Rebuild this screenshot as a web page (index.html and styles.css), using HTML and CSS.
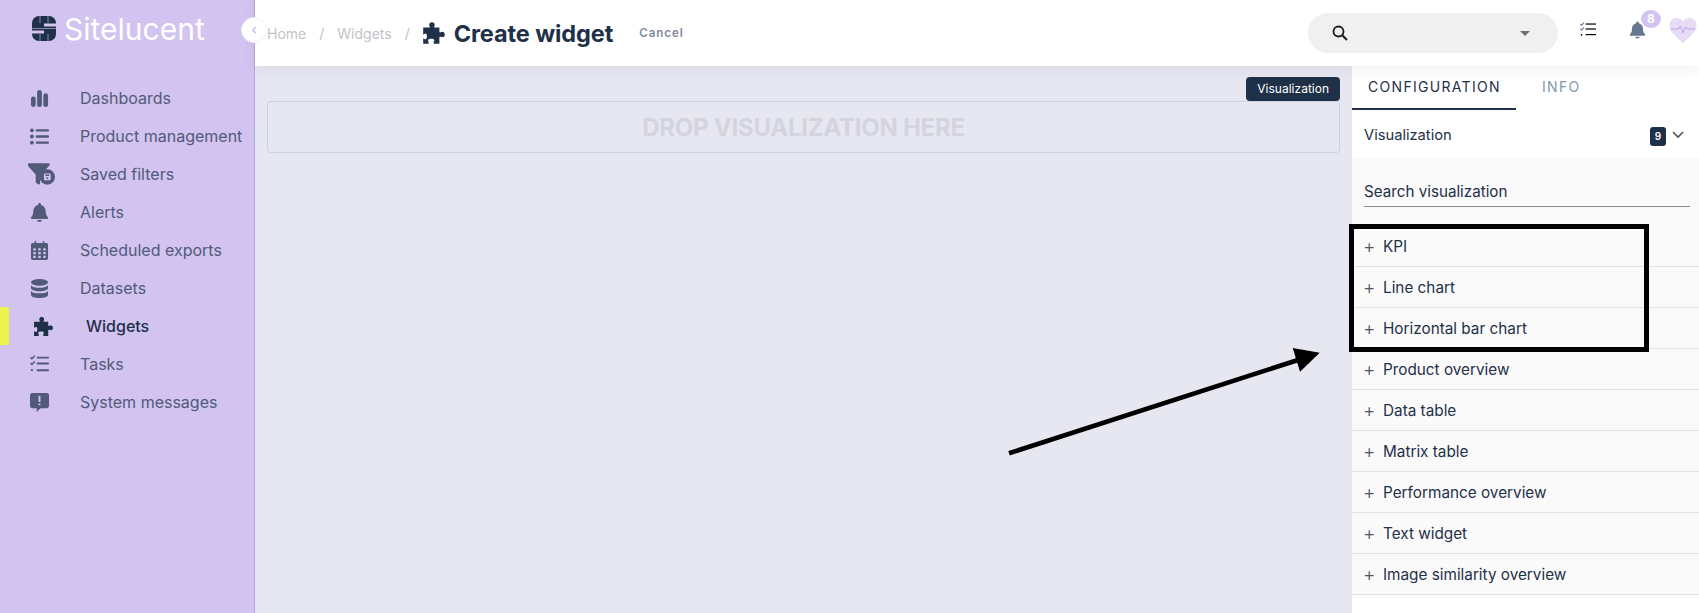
FILE: index.html
```html
<!DOCTYPE html>
<html lang="en">
<head>
    <meta charset="UTF-8">
    <meta name="viewport" content="width=device-width, initial-scale=1.0">
    <title>Create widget</title>
    <link rel="stylesheet" href="styles.css">
</head>
<body>
    <div class="sidebar">
        <div class="logo">
            <svg class="logo-mark" viewBox="0 0 24 25" width="24" height="25">
                <rect width="24" height="25" rx="7" fill="#1f3049"/>
                <rect x="12" y="7.500" width="12" height="3" fill="#d2c3f0"/>
                <rect x="0" y="14.500" width="12" height="3" fill="#d2c3f0"/>
                <path d="M8 0V7M16 0V7M8 18V25M16 18V25M0 12.500H24" stroke="#d2c3f0" stroke-width="0.6"/>
            </svg>
            <span class="logo-text">Sitelucent</span>
        </div>
        <button class="collapse">
            <svg viewBox="0 0 10 12" width="7" height="10"><path d="M7 1.500 2.500 6 7 10.500" fill="none" stroke="#c4aef0" stroke-width="1.600"/></svg>
        </button>
        <div class="menu">
            <a class="menu-item" href="#">
                <svg class="menu-icon" viewBox="0 0 20 20"><rect x="1" y="8" width="5" height="11" rx="2.500"/><rect x="7.500" y="1" width="5" height="18" rx="2.500"/><rect x="14" y="4.500" width="5" height="14.500" rx="2.500"/></svg>
                Dashboards
            </a>
            <a class="menu-item" href="#">
                <svg class="menu-icon" viewBox="0 0 20 20"><circle cx="2" cy="3.500" r="2"/><circle cx="2" cy="10" r="2"/><circle cx="2" cy="16.500" r="2"/><rect x="6" y="2.300" width="14" height="2.400" rx="1"/><rect x="6" y="8.800" width="14" height="2.400" rx="1"/><rect x="6" y="15.300" width="14" height="2.400" rx="1"/></svg>
                Product management
            </a>
            <a class="menu-item" href="#">
                <svg class="menu-icon menu-icon-wide" viewBox="0 0 30 22"><path d="M1 1.500C1 .5 1.500 0 2.500 0H22C23.500 0 24 1.500 23 2.500L19 6.500C15 8 12.500 12 13.500 17V21C13.500 22 12 22 11 21.300L9 19.500V11.500L1.300 3C1 2.500 1 2 1 1.500Z"/><circle cx="21" cy="14" r="8"/><rect x="17.500" y="10.500" width="7" height="7" rx="1" fill="#d2c3f0"/><rect x="19" y="11.500" width="4" height="1.500"/><circle cx="21" cy="15.300" r="1"/></svg>
                Saved filters
            </a>
            <a class="menu-item" href="#">
                <svg class="menu-icon" viewBox="0 0 20 20"><path d="M10 0C9 0 8.500 .7 8.500 1.500V2.200C5.500 3 3.500 5.500 3.500 8.500C3.500 12 2.500 13.500 1.300 14.800C.6 15.600 1 16.800 2 16.800H18C19 16.800 19.400 15.600 18.700 14.800C17.500 13.500 16.500 12 16.500 8.500C16.500 5.500 14.500 3 11.500 2.200V1.500C11.500 .7 11 0 10 0ZM7.500 18C7.500 19.300 8.600 20 10 20S12.500 19.300 12.500 18Z"/></svg>
                Alerts
            </a>
            <a class="menu-item" href="#">
                <svg class="menu-icon" viewBox="0 0 20 20"><path fill-rule="evenodd" d="M5 0H6.500V2H13.500V0H15V2H17C18.500 2 19 3 19 4V18C19 19.300 18.300 20 17 20H3C1.700 20 1 19.300 1 18V4C1 3 1.500 2 3 2H5ZM3.500 7.500V10H6V7.500ZM8.700 7.500V10H11.300V7.500ZM14 7.500V10H16.500V7.500ZM3.500 11.500V14H6V11.500ZM8.700 11.500V14H11.300V11.500ZM14 11.500V14H16.500V11.500ZM3.500 15.500V18H6V15.500ZM8.700 15.500V18H11.300V15.500ZM14 15.500V18H16.500V15.500Z"/></svg>
                Scheduled exports
            </a>
            <a class="menu-item" href="#">
                <svg class="menu-icon" viewBox="0 0 20 20"><ellipse cx="10" cy="3.500" rx="9" ry="3.500"/><path d="M1 6.500C2.500 8.500 6 9.200 10 9.200S17.500 8.500 19 6.500V9.500C19 11.500 15 13 10 13S1 11.500 1 9.500ZM1 12.500C2.500 14.500 6 15 10 15S17.500 14.500 19 12.500V16.500C19 18.500 15 20 10 20S1 18.500 1 16.500Z"/></svg>
                Datasets
            </a>
            <a class="menu-item menu-item-active" href="#">
                <svg class="menu-icon" viewBox="0 0 20 20"><path d="M1 5.500H6C6.500 5.500 6.700 5 6.400 4.500C5.700 3.700 5.700 1 8.300 1S10.900 3.700 10.200 4.500C9.900 5 10.100 5.500 10.600 5.500H14.500V9C14.500 9.500 15 9.700 15.500 9.400C16.300 8.700 19 8.700 19 11.300S16.300 13.900 15.500 13.200C15 12.900 14.500 13.100 14.500 13.600V19H9.800V17.500C9.800 17 10.300 16.700 10.300 16C10.300 14.300 5 14.300 5 16C5 16.700 5.500 17 5.500 17.500V19H1V14.500C2 14.500 2.200 15.200 3 15.200C4.500 15.200 4.500 10.500 3 10.500C2.200 10.500 2 11.200 1 11.200Z"/></svg>
                Widgets
            </a>
            <a class="menu-item" href="#">
                <svg class="menu-icon" viewBox="0 0 20 20"><path d="M.5 2.500 2 4 5 .8M.5 8.500 2 10 5 6.800" fill="none" stroke="#515a78" stroke-width="1.500"/><circle cx="2" cy="16" r="1.200"/><rect x="7" y="1.800" width="13" height="2" rx=".8"/><rect x="7" y="8" width="13" height="2" rx=".8"/><rect x="7" y="15" width="13" height="2" rx=".8"/></svg>
                Tasks
            </a>
            <a class="menu-item" href="#">
                <svg class="menu-icon" viewBox="0 0 20 20"><path fill-rule="evenodd" d="M2.500 0H17.500C19 0 20 1 20 2.500V13.500C20 15 19 16 17.500 16H11L7 20V16H2.500C1 16 0 15 0 13.500V2.500C0 1 1 0 2.500 0ZM9 3V9.500H11V3ZM9 11V13H11V11Z"/></svg>
                System messages
            </a>
        </div>
    </div>

    <div class="main">
        <div class="topbar">
            <div class="crumbs">
                <a href="#">Home</a><span>/</span><a href="#">Widgets</a><span>/</span>
            </div>
            <svg class="title-icon" viewBox="0 0 20 20"><path d="M1 5.500H6C6.500 5.500 6.700 5 6.400 4.500C5.700 3.700 5.700 1 8.300 1S10.900 3.700 10.200 4.500C9.900 5 10.100 5.500 10.600 5.500H14.500V9C14.500 9.500 15 9.700 15.500 9.400C16.300 8.700 19 8.700 19 11.300S16.300 13.900 15.500 13.200C15 12.900 14.500 13.100 14.500 13.600V19H9.800V17.500C9.800 17 10.300 16.700 10.300 16C10.300 14.300 5 14.300 5 16C5 16.700 5.500 17 5.500 17.500V19H1V14.500C2 14.500 2.200 15.200 3 15.200C4.500 15.200 4.500 10.500 3 10.500C2.200 10.500 2 11.200 1 11.200Z"/></svg>
            <h1>Create widget</h1>
            <a class="cancel" href="#">Cancel</a>
            <div class="topbar-right">
                <div class="search">
                    <svg viewBox="0 0 16 16" width="16" height="16"><circle cx="6.500" cy="6.500" r="5" fill="none" stroke="#1b1b1b" stroke-width="1.800"/><path d="M10.300 10.300 15 15" stroke="#1b1b1b" stroke-width="2"/></svg>
                    <span class="search-caret"></span>
                </div>
                <svg class="tasks-icon" viewBox="0 0 20 20"><path d="M.5 2.500 2 4 5 .8M.5 8.500 2 10 5 6.800" fill="none" stroke="#66788f" stroke-width="1.400"/><circle cx="2" cy="16" r="1.100"/><rect x="7" y="1.800" width="13" height="1.500"/><rect x="7" y="8" width="13" height="1.500"/><rect x="7" y="15" width="13" height="1.500"/></svg>
                <div class="bell">
                    <svg viewBox="0 0 20 20" width="17" height="18"><path d="M10 0C9 0 8.500 .7 8.500 1.500V2.200C5.500 3 3.500 5.500 3.500 8.500C3.500 12 2.500 13.500 1.300 14.800C.6 15.600 1 16.800 2 16.800H18C19 16.800 19.400 15.600 18.700 14.800C17.500 13.500 16.500 12 16.500 8.500C16.500 5.500 14.500 3 11.500 2.200V1.500C11.500 .7 11 0 10 0ZM7.500 18C7.500 19.300 8.600 20 10 20S12.500 19.300 12.500 18Z" fill="#66788f"/></svg>
                    <span class="bell-badge">8</span>
                </div>
                <svg class="heart" viewBox="0 0 28 25"><path d="M14 25C11 22 1 15 .5 8.500C.2 3.500 3.500 0 7.500 0C10 0 12.500 1.300 14 3.500C15.500 1.300 18 0 20.500 0C24.500 0 27.800 3.500 27.500 8.500C27 15 17 22 14 25Z" fill="#e6dcf8"/><path d="M2 11H9.500L11.500 8 14 15 16.500 9 18 11H26" fill="none" stroke="#b9a3e6" stroke-width="1"/></svg>
            </div>
        </div>

        <div class="content">
            <div class="canvas">
                <div class="canvas-head"><span class="tag">Visualization</span></div>
                <div class="dropzone">DROP VISUALIZATION HERE</div>
            </div>

            <div class="panel">
                <div class="tabs">
                    <a class="tab tab-active" href="#">CONFIGURATION</a>
                    <a class="tab" href="#">INFO</a>
                </div>
                <div class="panel-head">
                    <span>Visualization</span>
                    <span class="count">9</span>
                    <svg viewBox="0 0 12 8" width="12" height="8"><path d="M1 1 6 6 11 1" fill="none" stroke="#4b5563" stroke-width="1.600"/></svg>
                </div>
                <div class="panel-body">
                    <div class="search-vis"><span>Search visualization</span></div>
                    <div class="vis-list">
                        <div class="vis-item"><span class="plus">+</span>KPI</div>
                        <div class="vis-item"><span class="plus">+</span>Line chart</div>
                        <div class="vis-item"><span class="plus">+</span>Horizontal bar chart</div>
                        <div class="vis-item"><span class="plus">+</span>Product overview</div>
                        <div class="vis-item"><span class="plus">+</span>Data table</div>
                        <div class="vis-item"><span class="plus">+</span>Matrix table</div>
                        <div class="vis-item"><span class="plus">+</span>Performance overview</div>
                        <div class="vis-item"><span class="plus">+</span>Text widget</div>
                        <div class="vis-item"><span class="plus">+</span>Image similarity overview</div>
                    </div>
                </div>
            </div>
        </div>
    </div>

    <!-- annotation drawn over the screenshot -->
    <div class="callout-box"></div>
    <svg class="callout-arrow" viewBox="0 0 330 120" width="330" height="120">
        <path d="M1 113.300 290 20" stroke="#000" stroke-width="4.600"/>
        <path d="M311.700 12.700 284.700 8 292 31.700Z" fill="#000"/>
    </svg>
</body>
</html>
```

FILE: styles.css
```css
* {
    box-sizing: border-box;
}

body {
    font-family: Inter, "Noto Sans", Arial, sans-serif;
    margin: 0;
    height: 613px;
    overflow: hidden;
    display: flex;
    background-color: #e7e7f1;
    color: #1f3049;
}

a {
    text-decoration: none;
    color: inherit;
}

.sidebar {
    position: relative;
    width: 255px;
    flex-shrink: 0;
    background-color: #d2c3f0;
    border-right: 1px solid #b3a8d8;
}

.logo {
    display: flex;
    align-items: flex-start;
    gap: 8px;
    padding: 16px 0 0 32px;
    height: 79px;
}

.logo-text {
    font-size: 30px;
    line-height: 26px;
    color: #fff;
}

.collapse {
    position: absolute;
    top: 17px;
    left: 241px;
    width: 26px;
    height: 26px;
    padding: 0;
    border: 1px solid #f0edf8;
    border-radius: 50%;
    background-color: #fff;
    display: flex;
    align-items: center;
    justify-content: center;
    z-index: 2;
}

.menu-item {
    display: flex;
    align-items: center;
    height: 38px;
    padding-left: 30px;
    font-size: 16px;
    color: #515a78;
    white-space: nowrap;
}

.menu-icon {
    width: 19px;
    height: 19px;
    margin-right: 31px;
    fill: #515a78;
    flex-shrink: 0;
}

.menu-icon-wide {
    width: 29px;
    height: 22px;
    margin-left: -3px;
    margin-right: 24px;
}

.menu-item-active {
    color: #1f3049;
    border-left: 9px solid #ecf34c;
    padding-left: 24px;
    font-weight: 500;
}

.menu-item-active .menu-icon {
    width: 21px;
    height: 21px;
    fill: #1f3049;
    margin-right: 32px;
}

.main {
    flex: 1;
    min-width: 0;
    display: flex;
    flex-direction: column;
}

.topbar {
    height: 66px;
    flex-shrink: 0;
    background-color: #fff;
    display: flex;
    align-items: center;
    padding-left: 12px;
    box-shadow: 0 3px 14px rgba(60, 60, 90, 0.08);
    position: relative;
    z-index: 1;
}

.crumbs {
    display: flex;
    gap: 13px;
    font-size: 14px;
    color: #c2c2c6;
}

.title-icon {
    width: 24px;
    height: 24px;
    margin-left: 12px;
    fill: #1f3049;
}

.topbar h1 {
    margin: 0 0 0 8px;
    font-size: 23.500px;
    font-weight: 700;
    letter-spacing: -0.1px;
}

.cancel {
    margin-left: 26px;
    font-size: 11.500px;
    font-weight: 600;
    letter-spacing: 1px;
    color: #7f8899;
}

.topbar-right {
    margin-left: auto;
    display: flex;
    align-items: center;
    padding-right: 2px;
}

.search {
    width: 250px;
    height: 40px;
    border-radius: 20px;
    background-color: #f0f0f0;
    display: flex;
    align-items: center;
    justify-content: space-between;
    padding: 0 28px 0 24px;
}

.search-caret {
    width: 0;
    height: 0;
    border-left: 5px solid transparent;
    border-right: 5px solid transparent;
    border-top: 5px solid #6f6f6f;
}

.tasks-icon {
    width: 18px;
    height: 16px;
    margin: 0 0 6px 21px;
}

.bell {
    position: relative;
    margin: 0 0 6px 32px;
    display: flex;
}

.bell-badge {
    position: absolute;
    top: -11px;
    left: 12px;
    width: 20px;
    height: 18px;
    border-radius: 50%;
    background-color: #d2c3f0;
    color: #fff;
    font-size: 12px;
    font-weight: 700;
    text-align: center;
    line-height: 18px;
}

.heart {
    width: 28px;
    height: 25px;
    margin: 0 0 6px 23px;
}

.content {
    flex: 1;
    min-height: 0;
    display: flex;
}

.canvas {
    flex: 1;
    min-width: 0;
    padding: 11px 12px 0 12px;
}

.canvas-head {
    display: flex;
    justify-content: flex-end;
    height: 24px;
}

.tag {
    height: 24px;
    line-height: 24px;
    padding: 0 11px;
    background-color: #1f3049;
    color: #fff;
    font-size: 12px;
    border-radius: 4px;
}

.dropzone {
    height: 52px;
    border: 1px solid #d0d0dc;
    border-radius: 4px;
    display: flex;
    align-items: center;
    justify-content: center;
    font-size: 24px;
    font-weight: 700;
    letter-spacing: -0.25px;
    color: #d4d4de;
}

.panel {
    width: 347px;
    flex-shrink: 0;
    background-color: #fff;
    display: flex;
    flex-direction: column;
}

.tabs {
    height: 44px;
    flex-shrink: 0;
    display: flex;
}

.tab {
    height: 44px;
    padding: 0 16px;
    line-height: 41px;
    font-size: 14px;
    letter-spacing: 1.300px;
    color: #8497ab;
}

.tab-active {
    width: 164px;
    color: #1f3049;
    border-bottom: 2px solid #1f3049;
}

.tab + .tab {
    margin-left: 10px;
}

.panel-head {
    height: 48px;
    flex-shrink: 0;
    display: flex;
    align-items: center;
    padding: 1px 15px 0 12px;
    font-size: 14.700px;
}

.panel-head span:first-child {
    flex: 1;
}

.count {
    width: 16px;
    height: 19px;
    margin: 4px 6px 0 0;
    border-radius: 3px;
    background-color: #1f3049;
    color: #fff;
    font-size: 10px;
    font-weight: 600;
    line-height: 19px;
    text-align: center;
}

.panel-body {
    background-color: #fafafa;
}

.search-vis {
    margin: 0 9px 0 12px;
    padding-top: 24px;
    height: 49px;
    border-bottom: 1px solid #8c8c8c;
    font-size: 15.200px;
}

.vis-list {
    margin-top: 19px;
}

.vis-item {
    height: 41px;
    display: flex;
    align-items: center;
    padding-left: 11px;
    font-size: 15.300px;
    border-bottom: 1px solid #e2e2e2;
}

.plus {
    width: 20px;
    font-size: 19px;
    line-height: 1;
    font-weight: 300;
    color: #4b5563;
}

.callout-box {
    position: absolute;
    left: 1349px;
    top: 224px;
    width: 300px;
    height: 128px;
    border: 5px solid #000;
}

.callout-arrow {
    position: absolute;
    left: 1008px;
    top: 340px;
}
```
